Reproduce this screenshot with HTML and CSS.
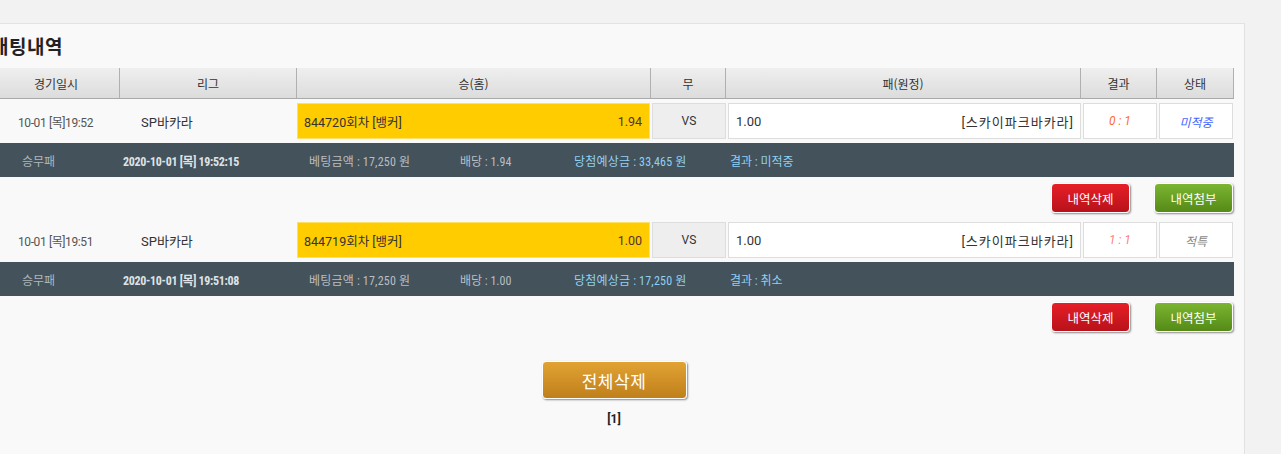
FILE: index.html
```html
<!DOCTYPE html>
<html lang="ko">
<head>
<meta charset="utf-8">
<title>배팅내역</title>
<link rel="stylesheet" href="styles.css">
</head>
<body>
<div class="page">
  <div class="panel">
    <h2 class="title">배팅내역</h2>
    <div class="grid head">
      <div class="hc">경기일시</div>
      <div class="hc">리그</div>
      <div class="hc">승(홈)</div>
      <div class="hc">무</div>
      <div class="hc">패(원정)</div>
      <div class="hc">결과</div>
      <div class="hc last">상태</div>
    </div>

    <div class="grid row">
      <div class="c date">10-01 [목]19:52</div>
      <div class="c league">SP바카라</div>
      <div class="c"><div class="box home"><span>844720회차 [뱅커]</span><span class="odds">1.94</span></div></div>
      <div class="c"><div class="box vs">VS</div></div>
      <div class="c"><div class="box away"><span>1.00</span><span>[스카이파크바카라]</span></div></div>
      <div class="c"><div class="box res lose">0 : 1</div></div>
      <div class="c"><div class="box res miss">미적중</div></div>
    </div>
    <div class="bar">
      <span class="b-type">승무패</span>
      <span class="b-time">2020-10-01 [목] 19:52:15</span>
      <span class="b-amt">베팅금액 : 17,250 원</span>
      <span class="b-odd">배당 : 1.94</span>
      <span class="b-win">당첨예상금 : 33,465 원</span>
      <span class="b-res">결과 : 미적중</span>
    </div>
    <div class="actions">
      <button class="btn red">내역삭제</button>
      <button class="btn green">내역첨부</button>
    </div>

    <div class="grid row">
      <div class="c date">10-01 [목]19:51</div>
      <div class="c league">SP바카라</div>
      <div class="c"><div class="box home"><span>844719회차 [뱅커]</span><span class="odds">1.00</span></div></div>
      <div class="c"><div class="box vs">VS</div></div>
      <div class="c"><div class="box away"><span>1.00</span><span>[스카이파크바카라]</span></div></div>
      <div class="c"><div class="box res tie">1 : 1</div></div>
      <div class="c"><div class="box res refund">적특</div></div>
    </div>
    <div class="bar">
      <span class="b-type">승무패</span>
      <span class="b-time">2020-10-01 [목] 19:51:08</span>
      <span class="b-amt">베팅금액 : 17,250 원</span>
      <span class="b-odd">배당 : 1.00</span>
      <span class="b-win">당첨예상금 : 17,250 원</span>
      <span class="b-res">결과 : 취소</span>
    </div>
    <div class="actions">
      <button class="btn red">내역삭제</button>
      <button class="btn green">내역첨부</button>
    </div>

    <div class="footer">
      <button class="btn-all">전체삭제</button>
      <div class="pager">[1]</div>
    </div>
  </div>
</div>
</body>
</html>
```

FILE: styles.css
```css
html, body {
  margin: 0;
  padding: 0;
  background: #f2f2f2;
  height: 100%;
  overflow: hidden;
}
body {
  font-family: Roboto, "Noto Sans CJK KR", sans-serif;
  font-size: 12px;
  color: #333;
}
.page {
  padding-top: 23px;
}
.panel {
  margin-left: -7px;
  width: 1240px;
  padding-right: 11px;
  background: #f9f9f9;
  border-top: 1px solid #e2e2e2;
  border-right: 1px solid #e2e2e2;
  height: 440px;
}
.title {
  margin: 0 0 0 -2px;
  height: 44px;
  line-height: 44px;
  font-size: 19px;
  font-weight: bold;
  color: #222;
  font-family: "Noto Sans CJK KR", sans-serif;
  letter-spacing: 0.5px;
}
.grid {
  display: grid;
  grid-template-columns: 127px 177px 354px 75px 355px 76px 77px;
  width: 1241px;
}
.head {
  height: 30px;
  background: linear-gradient(#efefef, #dcdcdc);
  border-bottom: 1px solid #a9a9a9;
}
.hc {
  display: flex;
  align-items: center;
  justify-content: center;
  border-right: 1px solid #b0b0b0;
  font-family: "Noto Sans CJK KR", sans-serif;
  font-size: 12px;
  color: #333;
}
.row {
  height: 44px;
}
.c {
  display: flex;
  align-items: center;
}
.date {
  justify-content: center;
  color: #555;
  font-size: 12px;
  letter-spacing: -0.4px;
  padding-right: 2px;
}
.league {
  padding-left: 21px;
  font-size: 13px;
  color: #333;
}
.box {
  height: 34px;
  flex: 1;
  display: flex;
  align-items: center;
  box-sizing: content-box;
}
.home {
  background: #ffcc00;
  border: 1px solid #ffe066;
  margin-right: 1px;
  justify-content: space-between;
  padding: 0 7px 0 6px;
  color: #333;
  font-size: 12.5px;
}
.home .odds {
  color: #533;
}
.vs {
  background: #eeeeee;
  border: 1px solid #dddddd;
  margin-left: 1px;
  justify-content: center;
  color: #333;
}
.away {
  background: #fff;
  border: 1px solid #dddddd;
  margin-left: 2px;
  justify-content: space-between;
  padding: 0 6px 0 7px;
  font-size: 13px;
  color: #333;
}
.away span:last-child {
  letter-spacing: 1px;
}
.res {
  background: #fff;
  border: 1px solid #dddddd;
  margin: 0 0 0 2px;
  justify-content: center;
  font-style: italic;
}
.lose { color: #ff6a33; }
.tie { color: #ff8080; }
.miss { color: #4466ff; margin-right: 1px; }
.refund { color: #888; margin-right: 1px; }
.bar {
  display: grid;
  grid-template-columns: 101px 186px 151px 114px 156px auto;
  align-items: center;
  padding-left: 29px;
  height: 34px;
  width: 1212px;
  background: #44525c;
  color: #b9bec2;
  font-family: "Liberation Sans Narrow", "Roboto Condensed", Roboto, "Noto Sans CJK KR", sans-serif;
  font-size: 12px;
}
.b-type { font-family: "Noto Sans CJK KR", sans-serif; color: #b0b6ba; }
.b-time { font-weight: bold; color: #dfe2e4; letter-spacing: -0.3px; }
.b-amt { letter-spacing: 0.2px; }
.b-win, .b-res { color: #8fd0f2; }
.b-win { letter-spacing: 0.2px; }
.actions {
  display: flex;
  justify-content: flex-end;
  gap: 24px;
  width: 1240px;
  padding: 6px 0 5px;
}
.btn {
  width: 79px;
  height: 30px;
  border: 1px solid #fff;
  border-radius: 4px;
  color: #fff;
  font-family: "Noto Sans CJK KR", sans-serif;
  font-size: 12.5px;
  box-shadow: 1px 1px 2px rgba(0,0,0,0.45);
  padding: 0;
}
.red { background: linear-gradient(#e61e27, #b8121a); }
.green { background: linear-gradient(#7bb531, #558a17); }
.footer {
  width: 1241px;
  display: flex;
  flex-direction: column;
  align-items: center;
  padding-top: 24px;
}
.btn-all {
  width: 145px;
  height: 38px;
  border: 1px solid #fff;
  border-radius: 4px;
  background: linear-gradient(#e2a232, #bf801c);
  color: #fff;
  font-family: "Noto Sans CJK KR", sans-serif;
  font-size: 17px;
  letter-spacing: 0.5px;
  box-shadow: 1px 1px 2px rgba(0,0,0,0.45);
  padding: 0;
  margin-left: 1px;
}
.pager {
  margin-top: 13px;
  font-weight: bold;
  font-size: 12px;
  color: #222;
  margin-left: 1px;
}
```
